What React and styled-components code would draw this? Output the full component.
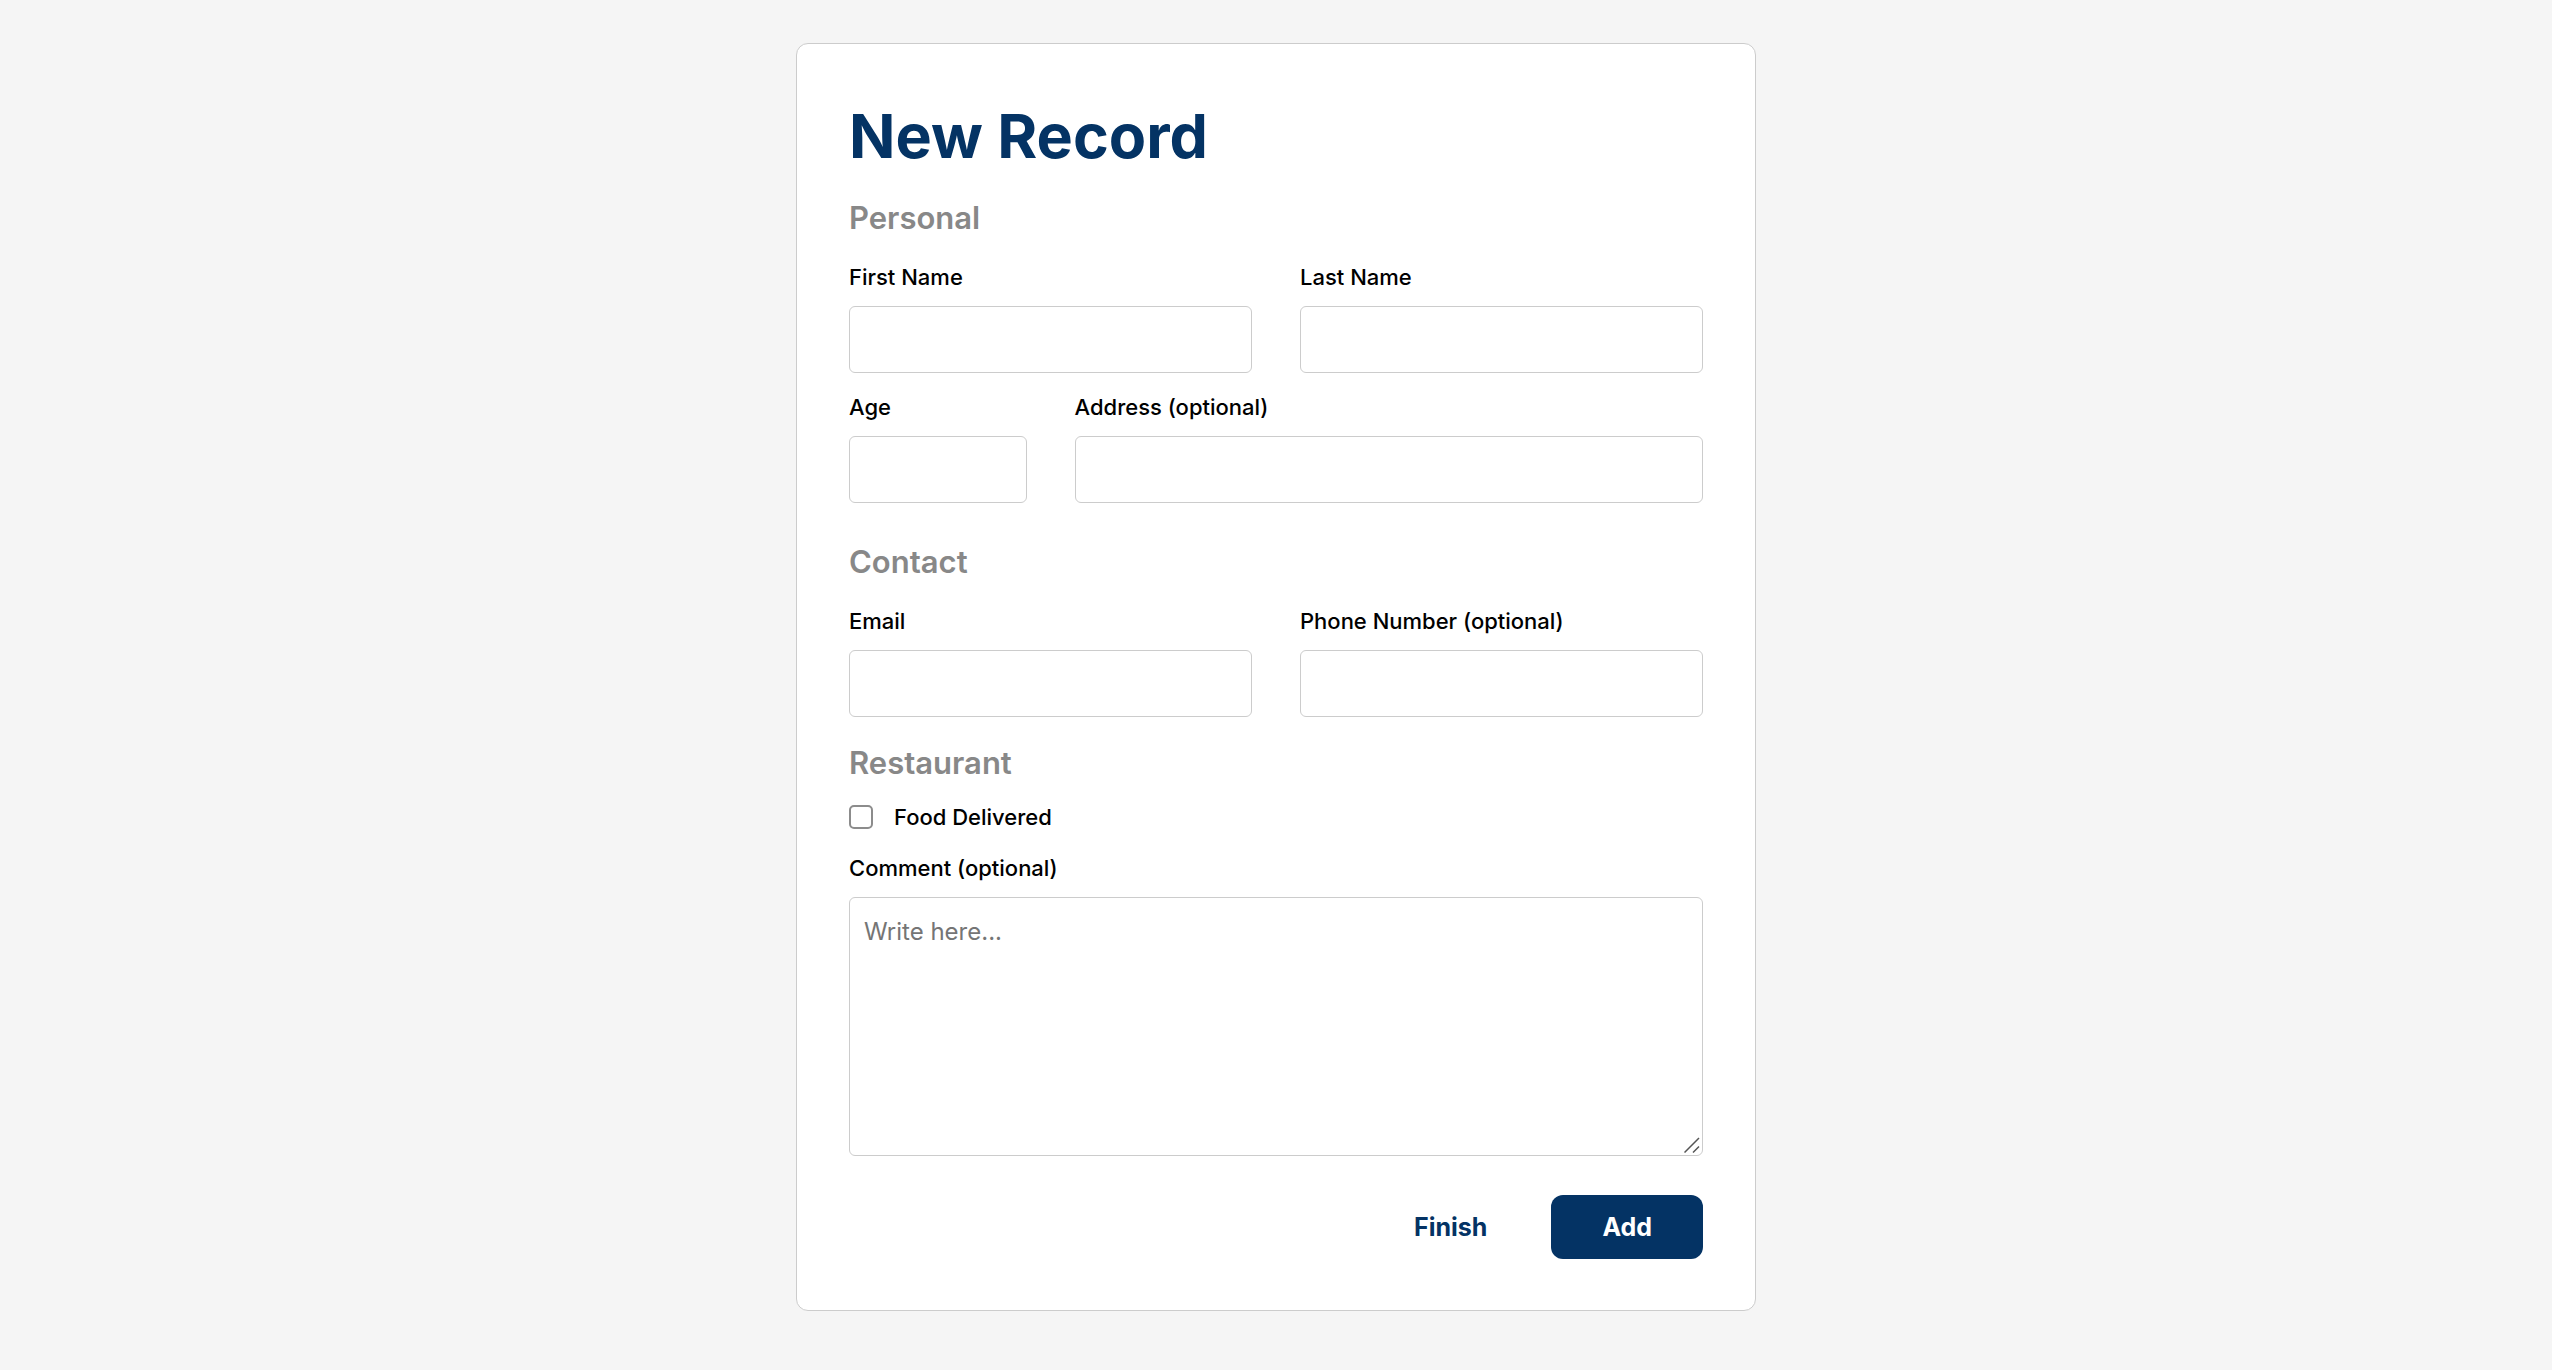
import React from "react";
import styled, { createGlobalStyle } from "styled-components";

const navy = "#043364";
const line = "#cccccc";

const GlobalStyle = createGlobalStyle`
  *, *::before, *::after { box-sizing: border-box; }
  body {
    margin: 0;
    background: #f5f5f5;
    color: #000;
    font-family: Inter, "Liberation Sans", sans-serif;
  }
  input, textarea, button { font-family: inherit; }
`;

const Page = styled.main`
  display: flex;
  justify-content: center;
  padding: 43px 24px;
`;

const Card = styled.form`
  width: 100%;
  max-width: 960px;
  padding: 52px 52px 51px;
  background: #fff;
  border: 1px solid ${line};
  border-radius: 12px;
`;

const Title = styled.h1`
  margin: 0;
  font-size: 61px;
  line-height: 80px;
  font-weight: 700;
  color: ${navy};
`;

const Section = styled.section`
  display: flex;
  flex-direction: column;
  margin-top: ${({ $space }) => $space || "26px"};
`;

const SectionTitle = styled.h2`
  margin: 0 0 ${({ $gap }) => $gap || "26px"};
  font-size: 31px;
  line-height: 40px;
  font-weight: 600;
  color: #888;
`;

const Fields = styled.div`
  display: grid;
  grid-template-columns: repeat(4, minmax(0, 1fr));
  gap: 21px 48px;
`;

const Field = styled.div`
  grid-column: span ${({ $span }) => $span || 4};
  display: flex;
  flex-direction: column;
  gap: 16px;
`;

const Label = styled.label`
  font-size: 22px;
  line-height: 26px;
  font-weight: 500;
`;

const TextInput = styled.input`
  width: 100%;
  height: 67px;
  padding: 0 14px;
  font-size: 24px;
  background: #fff;
  border: 1px solid ${line};
  border-radius: 6px;
`;

const CheckRow = styled.div`
  display: flex;
  align-items: center;
  gap: 21px;
  margin-bottom: 25px;
`;

const Checkbox = styled.input`
  appearance: none;
  width: 24px;
  height: 24px;
  margin: 0;
  background: #fff;
  border: 2px solid #8c8c8c;
  border-radius: 5px;
  &:checked { background: ${navy}; }
`;

const CommentBox = styled.div`
  position: relative;
  display: grid;
`;

const TextArea = styled.textarea`
  width: 100%;
  height: 259px;
  padding: 18px 14px;
  font-size: 24px;
  line-height: 32px;
  background: #fff;
  border: 1px solid ${line};
  border-radius: 6px;
  resize: vertical;
  &::placeholder { color: #757575; }
  &::-webkit-resizer { background: transparent; }
`;

const Grip = styled.svg`
  position: absolute;
  right: 3px;
  bottom: 3px;
  width: 16px;
  height: 16px;
  pointer-events: none;
`;

const Actions = styled.div`
  display: flex;
  justify-content: flex-end;
  gap: 13px;
  margin-top: 39px;
`;

const Button = styled.button`
  height: 64px;
  padding: 0 51px;
  font-size: 25px;
  line-height: 32px;
  font-weight: 700;
  border: 0;
  border-radius: 12px;
  cursor: pointer;
  color: ${({ $primary }) => ($primary ? "#fff" : navy)};
  background: ${({ $primary }) => ($primary ? navy : "transparent")};
`;

function InputField({ id, label, span = 2, type = "text" }) {
  return (
    <Field $span={span}>
      <Label htmlFor={id}>{label}</Label>
      <TextInput id={id} name={id} type={type} />
    </Field>
  );
}

export default function App() {
  return (
    <>
      <GlobalStyle />
      <Page>
        <Card onSubmit={(event) => event.preventDefault()}>
          <Title>New Record</Title>
          <Section $space="22px">
            <SectionTitle>Personal</SectionTitle>
            <Fields>
              <InputField id="firstName" label="First Name" />
              <InputField id="lastName" label="Last Name" />
              <InputField id="age" label="Age" span={1} />
              <InputField id="address" label="Address (optional)" span={3} />
            </Fields>
          </Section>
          <Section $space="39px">
            <SectionTitle>Contact</SectionTitle>
            <Fields>
              <InputField id="email" label="Email" type="email" />
              <InputField id="phone" label="Phone Number (optional)" type="tel" />
            </Fields>
          </Section>
          <Section>
            <SectionTitle $gap="21px">Restaurant</SectionTitle>
            <CheckRow>
              <Checkbox id="delivered" name="delivered" type="checkbox" />
              <Label htmlFor="delivered">Food Delivered</Label>
            </CheckRow>
            <Field>
              <Label htmlFor="comment">Comment (optional)</Label>
              <CommentBox>
                <TextArea id="comment" name="comment" placeholder="Write here..." />
                <Grip viewBox="0 0 16 16" fill="none" stroke="#555" strokeWidth="1.5" aria-hidden="true">
                  <path d="M0.5 15.5 L15 1 M9 15.5 L15 9.5" />
                </Grip>
              </CommentBox>
            </Field>
          </Section>
          <Actions>
            <Button type="button">Finish</Button>
            <Button type="submit" $primary>Add</Button>
          </Actions>
        </Card>
      </Page>
    </>
  );
}
